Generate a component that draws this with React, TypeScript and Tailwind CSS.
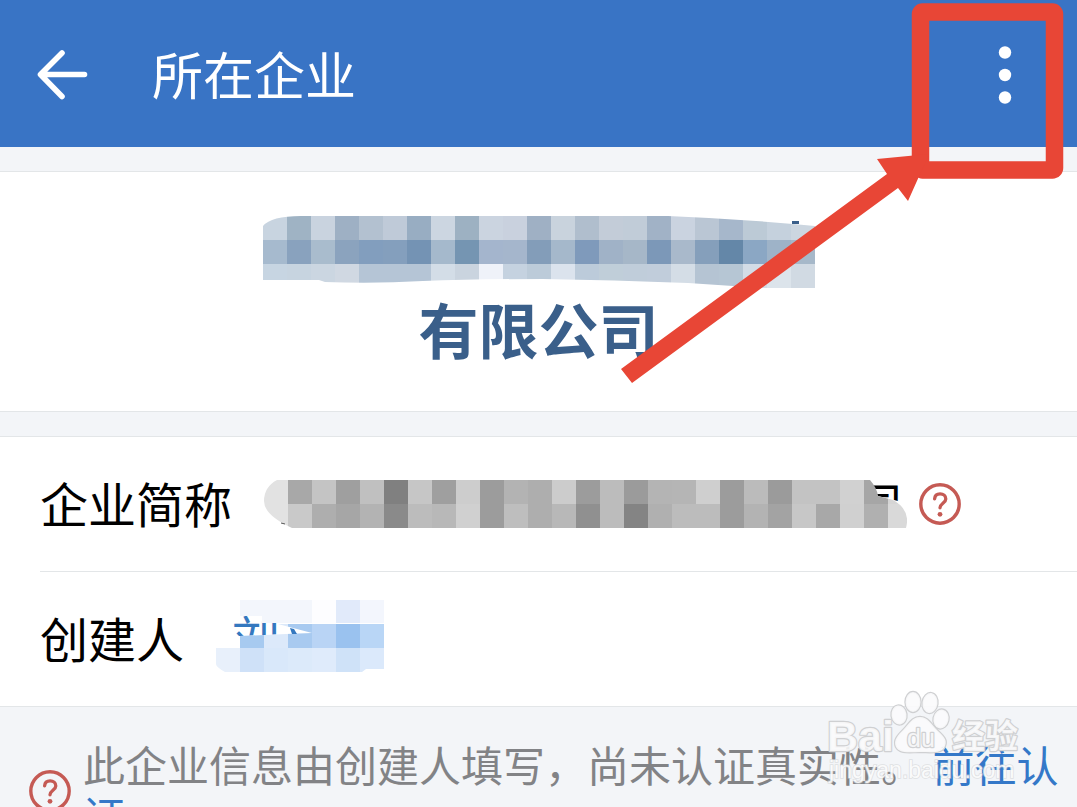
import React from "react";

const CELL = 24;

const nameRows = [
  ["#c8d4e0", "#9fb3c4", "#c9d3df", "#9eb0c4", "#b3c1d0", "#bfcad8", "#98adc2", "#ccd6e1", "#9db1c2", "#cbd4e0", "#c9d1de", "#9fb0c4", "#c9d3dd", "#b0becd", "#c3ccd8", "#c1ccd8", "#a1b2c6", "#cad3e0", "#bac6d4", "#a6b7cb", "#bccad6", "#c5d1dd", "#ccd6e0"],
  ["#a6bace", "#89a2be", "#a9bccd", "#8ba3be", "#829ebe", "#849fbd", "#7493b4", "#a5b9cc", "#7595b2", "#a4b5cd", "#a5b6cc", "#839db9", "#a5b8cb", "#7f9abb", "#a0b2c7", "#a6b7c8", "#7c98b8", "#a9b9cb", "#859fbb", "#6487a8", "#8ba7c4", "#9eb3c8", "#a6b8c9"],
  ["#c7d5e2", "#c7d4e0", "#cbd6e1", "#d0d8e2", "#b5c5d6", "#b5c5d6", "#b5c5d6", "#d3dde7", "#cad4df", "#eff2f9", "#c5d2e0", "#bccbd9", "#dbe3ed", "#bccbda", "#c0ced9", "#c0cdda", "#c1cddb", "#d4dde6", "#b5c4d3", "#b6c6d4", "#d3dce6", "#dce4eb", "#d1dae3"],
];

const shortNameRows = [
  ["#e2e2e2", "#a8a8a8", "#c4c4c4", "#9f9f9f", "#c0c0c0", "#808080", "#c6c6c6", "#9f9f9f", "#cdcdcd", "#9c9c9c", "#b3b3b3", "#aeaeae", "#cccccc", "#9c9c9c", "#bcbcbc", "#9b9b9b", "#b4b4b4", "#b5b5b5", "#cfcfcf", "#9c9c9c", "#bbbbbb", "#9b9b9b", "#c3c3c3", "#c3c3c3", "#d1d1d1", "#a6a6a6", "#d5d5d5"],
  ["#e2e2e2", "#c9c9c9", "#aeaeae", "#a6a6a6", "#b3b3b3", "#8a8a8a", "#bcbcbc", "#b8b8b8", "#d0d0d0", "#9c9c9c", "#bebebe", "#aeaeae", "#b8b8b8", "#909090", "#bcbcbc", "#848484", "#b0b0b0", "#bcbcbc", "#bcbcbc", "#9c9c9c", "#b3b3b3", "#a3a3a3", "#c7c7c7", "#a8a8a8", "#d0d0d0", "#b0b0b0", "#d9d9d9"],
];

const creatorRows = [
  ["#ffffff", "#a7caf0", "#dce9fa", "#a8caf0", "#b9d4f5", "#9ac2ef", "#b9d6f6"],
  ["#e8f0fb", "#cfe1f8", "#d9e8fa", "#dceafa", "#dfebfb", "#cfe2f8", "#dbe9fb"],
];

function Cells({ rows, top = 0 }: { rows: string[][]; top?: number }) {
  return (
    <g shapeRendering="crispEdges">
      {rows.map((row, r) =>
        row.map((fill, c) => (
          <rect key={`${r}-${c}`} x={c * CELL} y={top + r * CELL} width={CELL} height={CELL} fill={fill} />
        )),
      )}
    </g>
  );
}

function HelpIcon() {
  return (
    <svg viewBox="0 0 42 42" className="size-[42px]" fill="none" stroke="#c55a54" aria-hidden="true">
      <circle cx="21" cy="21" r="19.2" strokeWidth="3.4" />
      <path d="M15.600 15.800c.3-3 2.500-4.900 5.500-4.900 3.300 0 5.700 2.100 5.700 5.100 0 4.100-5.800 4.500-5.800 8.800" strokeWidth="3.300" strokeLinecap="round" />
      <circle cx="21" cy="31.300" r="2.400" fill="#c55a54" stroke="none" />
    </svg>
  );
}

function Header() {
  return (
    <header className="flex h-[147px] shrink-0 items-center justify-between bg-[#3974c5] pt-0.5 pr-14 pl-9 text-white">
      <div className="flex items-center gap-16">
        <button type="button" aria-label="返回" className="block">
          <svg viewBox="0 0 52 52" className="size-[52px]" fill="none" stroke="currentColor" strokeWidth="5.600" strokeLinecap="round" strokeLinejoin="round">
            <path d="M26 4 4.500 25.500 26 47.500M5 25.500h43.500" />
          </svg>
        </button>
        <h1 className="pb-1 text-[51px] leading-[72px]">所在企业</h1>
      </div>
      <button type="button" aria-label="更多" className="block">
        <svg viewBox="0 0 32 60" className="h-[60px] w-8" fill="currentColor">
          <circle cx="16" cy="7.500" r="6.200" />
          <circle cx="16" cy="30" r="6.200" />
          <circle cx="16" cy="52.500" r="6.200" />
        </svg>
      </button>
    </header>
  );
}

function CompanyCard() {
  return (
    <section className="flex flex-col items-center border-y border-[#e3e6e8] bg-white pt-11 pb-[43px]">
      <svg viewBox="0 0 552 72" className="h-[72px] w-[552px]" aria-hidden="true">
        <defs>
          <clipPath id="company-mask">
            <path d="M0 10Q8 0 38 0H405Q480 3 552 10V72H500L425 67Q350 64 280 63Q210 63 160 65Q110 68 62 66L56 64H0Z" />
          </clipPath>
        </defs>
        <g clipPath="url(#company-mask)">
          <Cells rows={nameRows} />
        </g>
        <rect x="529" y="5" width="7" height="3" fill="#3a5f8a" />
      </svg>
      <h2 className="text-[60px] leading-[80px] font-bold text-[#3a5f8a]">有限公司</h2>
    </section>
  );
}

function Details() {
  return (
    <dl className="border-y border-[#e3e6e8] bg-white pl-10 text-[48px] leading-[72px] text-black">
      <div className="flex h-[134px] items-center gap-8">
        <dt className="pb-1">企业简称</dt>
        <dd className="flex items-center gap-3">
          <span className="relative flex w-[643px] justify-end pr-1 pb-1 leading-[68px]">
            司
            <svg viewBox="0 0 643 72" className="absolute inset-0 h-[72px] w-[643px]" aria-hidden="true">
              <defs>
                <clipPath id="short-name-mask">
                  <path d="M13 12H606Q613 20 614 28L629 32Q647 42 642 60H28Q0 47 0 33Q0 19 13 12Z" />
                </clipPath>
              </defs>
              <path d="M580 0H606V14L614 28 634 33 643 42V72H580Z" fill="#fff" />
              <g clipPath="url(#short-name-mask)">
                <Cells rows={shortNameRows} top={12} />
              </g>
              <path d="M17 55l4 1" stroke="#555" />
            </svg>
          </span>
          <button type="button" aria-label="企业简称说明" className="block">
            <HelpIcon />
          </button>
        </dd>
      </div>
      <div className="flex h-[135px] items-center gap-8 border-t border-[#e3e6e8]">
        <dt className="pb-1">创建人</dt>
        <dd className="relative w-[168px] pb-2 pl-4 leading-[64px] text-[#3478bf]">
          刘
          <svg viewBox="0 0 168 72" className="absolute inset-0 h-[72px] w-[168px]" aria-hidden="true">
            <defs>
              <clipPath id="creator-mask">
                <path d="M0 39Q2 34 24 33L70 31 96 30 62 21H168V66H150L146 69H9Q0 64 0 61Z" />
              </clipPath>
            </defs>
            <path d="M0 39Q2 34 24 33L70 31V72H0Z" fill="#fff" />
            <g clipPath="url(#creator-mask)">
              <Cells rows={creatorRows} top={21} />
            </g>
            <path d="M74 25l4 1 3 5h-5z" fill="#3478bf" />
          </svg>
          <svg viewBox="0 0 144 24" className="absolute -top-1 right-0 h-6 w-36" aria-hidden="true">
            <path d="M0 1H72V24H22V17H0Z" fill="#f3f6fc" />
            <path d="M72 1h24v24H72z" fill="#fdfdff" />
            <path d="M96 1h24v24H96z" fill="#e1eafa" />
            <path d="M120 1h24v24h-24z" fill="#f3f6fd" />
          </svg>
        </dd>
      </div>
    </dl>
  );
}

function Notice() {
  return (
    <footer className="flex shrink-0 items-center gap-3 pt-8 pr-4 pl-[29px]">
      <span className="mt-1 shrink-0">
        <HelpIcon />
      </span>
      <p className="text-[42px] leading-[50px] text-[#828386]">
        此企业信息由创建人填写，尚未认证真实性。{" "}
        <a href="#verify" className="text-[#3478c8]">
          前往认证
        </a>
      </p>
    </footer>
  );
}

function Annotation() {
  return (
    <svg viewBox="0 0 477 400" className="pointer-events-none absolute top-0 right-0 h-[400px] w-[477px]" aria-hidden="true">
      <rect x="320.500" y="12" width="134" height="158" rx="2" fill="none" stroke="#e84636" strokeWidth="17.500" strokeLinejoin="round" />
      <path d="M21 369 287 174 277 159 329 154 308 201 298 188 32 383Z" fill="#e84636" />
    </svg>
  );
}

function Watermark() {
  return (
    <svg viewBox="0 0 200 100" className="pointer-events-none absolute right-[54px] bottom-[17px] h-[100px] w-[200px]" aria-hidden="true">
      <g fill="#fbfbfc" fillOpacity=".9" stroke="#cfd0d2" strokeWidth="2.400" strokeLinejoin="round" paintOrder="stroke">
        <text x="4" y="61" fontFamily="Liberation Sans, Arial, sans-serif" fontWeight="700" fontSize="43">Bai</text>
        <ellipse cx="76" cy="25" rx="7.500" ry="9.500" transform="rotate(-8 76 25)" />
        <ellipse cx="90" cy="12" rx="7.500" ry="10" />
        <ellipse cx="107" cy="13" rx="7.500" ry="10" transform="rotate(8 107 13)" />
        <ellipse cx="118" cy="29" rx="7.500" ry="9.500" transform="rotate(12 118 29)" />
        <path d="M97 27c8 0 11 7 16 12 6 6 12 10 9 17-3 8-14 6-25 6s-20 2-24-5c-3-7 2-12 8-18 5-5 8-12 16-12Z" />
        <text x="84" y="57" fontFamily="Liberation Sans, Arial, sans-serif" fontSize="25">du</text>
        <text x="129" y="58" fontFamily="Noto Sans CJK SC, sans-serif" fontWeight="700" fontSize="33">经验</text>
      </g>
      <text x="6" y="88" fill="#fff" fillOpacity=".85" stroke="#d0d1d3" strokeOpacity=".6" strokeWidth="1.600" paintOrder="stroke" fontFamily="Liberation Sans, Arial, sans-serif" fontSize="23">
        jingyan.baidu.com
      </text>
    </svg>
  );
}

export default function App() {
  return (
    <main lang="zh-CN" className="relative flex h-screen flex-col overflow-hidden bg-[#f3f5f8] font-['Noto_Sans_CJK_SC',sans-serif]">
      <Header />
      <div className="flex shrink-0 flex-col gap-6 pt-6">
        <CompanyCard />
        <Details />
      </div>
      <Notice />
      <Annotation />
      <Watermark />
    </main>
  );
}
